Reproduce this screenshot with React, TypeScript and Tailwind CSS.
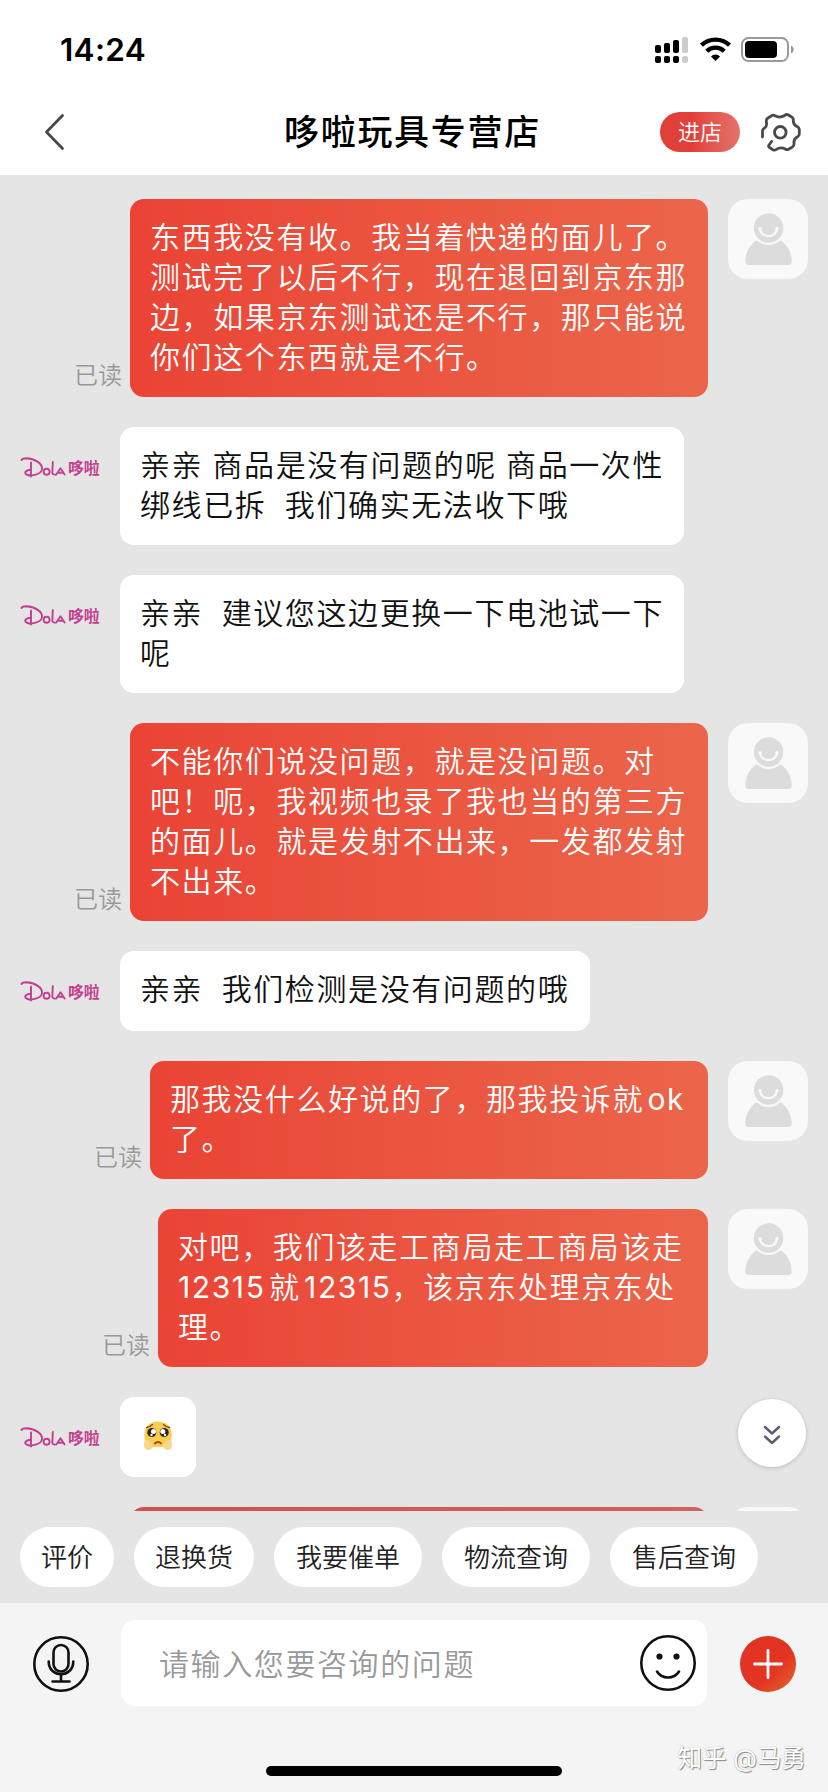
const FONT = "font-['Inter','Noto_Sans_CJK_SC',sans-serif]"

type Message = {
  from: 'me' | 'shop'
  lines: string[]
  width: string
}

const messages: Message[] = [
  {
    from: 'me',
    width: 'w-[578px]',
    lines: [
      '东西我没有收。我当着快递的面儿了。',
      '测试完了以后不行，现在退回到京东那',
      '边，如果京东测试还是不行，那只能说',
      '你们这个东西就是不行。',
    ],
  },
  {
    from: 'shop',
    width: 'w-[564px]',
    lines: ['亲亲 商品是没有问题的呢 商品一次性', '绑线已拆  我们确实无法收下哦'],
  },
  {
    from: 'shop',
    width: 'w-[564px]',
    lines: ['亲亲  建议您这边更换一下电池试一下', '呢'],
  },
  {
    from: 'me',
    width: 'w-[578px]',
    lines: [
      '不能你们说没问题，就是没问题。对',
      '吧！呃，我视频也录了我也当的第三方',
      '的面儿。就是发射不出来，一发都发射',
      '不出来。',
    ],
  },
  {
    from: 'shop',
    width: 'w-[470px]',
    lines: ['亲亲  我们检测是没有问题的哦'],
  },
  {
    from: 'me',
    width: 'w-[558px]',
    lines: ['那我没什么好说的了，那我投诉就ok', '了。'],
  },
  {
    from: 'me',
    width: 'w-[550px]',
    lines: ['对吧，我们该走工商局走工商局该走', '12315就12315，该京东处理京东处', '理。'],
  },
]

const quickActions = [
  { label: '评价', width: 'w-[94px]' },
  { label: '退换货', width: 'w-[120px]' },
  { label: '我要催单', width: 'w-[148px]' },
  { label: '物流查询', width: 'w-[148px]' },
  { label: '售后查询', width: 'w-[148px]' },
]

// runs of latin letters and digits, kept as their own parts
const LATIN_RUN = /(\w+)/

function StatusIcons() {
  return (
    <svg width="140" height="28" viewBox="0 0 140 28">
      {/* dual-SIM signal */}
      <g fill="#000">
        <rect x="0" y="9" width="6" height="8" rx="2" />
        <rect x="9" y="7" width="6" height="10" rx="2" />
        <rect x="18" y="4" width="6" height="13" rx="2" />
        <rect x="0" y="20" width="6" height="7" rx="2" />
        <rect x="9" y="20" width="6" height="7" rx="2" />
        <rect x="18" y="20" width="6" height="7" rx="2" />
      </g>
      <rect x="27" y="1" width="6" height="16" rx="2" fill="#ccc" />
      <rect x="27" y="20" width="6" height="7" rx="2" fill="#ccc" />
      {/* wifi */}
      <g fill="none" stroke="#000" strokeWidth="4.4">
        <path d="M46.5 9.2a20.5 20.5 0 0 1 28 0" />
        <path d="M51.8 15.2a12.4 12.4 0 0 1 17.4 0" />
      </g>
      <path d="M60.5 25l-4.6-4.6a6.8 6.8 0 0 1 9.2 0z" fill="#000" />
      {/* battery */}
      <rect x="87" y="2" width="46" height="23" rx="6.5" fill="none" stroke="#999" strokeWidth="2" />
      <rect x="90" y="5" width="32" height="17" rx="4" fill="#000" />
      <path d="M136 9.5c3.6 1.6 3.6 6.4 0 8z" fill="#999" />
    </svg>
  )
}

function GearIcon() {
  return (
    <svg width="42" height="42" viewBox="0 0 42 42" fill="none" stroke="#48494d" strokeWidth="2.8" strokeLinecap="round" strokeLinejoin="round">
      <circle cx="20.3" cy="21.3" r="5.8" />
      <path d="M2.500 26V20Q2.500 18 4.500 17Q7 15.500 6.500 12.500L6.300 9.500Q6.500 8 8 7L12 4.500Q13.500 3.800 15 4.800Q20 7.500 24.500 4.500Q26.500 3 28 3.800L32 6.200Q33.500 7 33.300 9Q33 13.500 37 15.500Q39.300 16.500 39.300 19V23Q39.300 25 37.500 25.800Q33.500 28 34 32Q34.300 35 32.500 36L28.500 38.300Q27 39.200 25.300 38Q20.500 35.500 16.500 38.300Q14.500 39.700 13 38.800L9.500 36.500Q8 35.500 9 34L11.500 30.500" />
    </svg>
  )
}

function ShopLogo() {
  return (
    <div className="mt-[29px] flex h-[26px] w-20 shrink-0 items-center text-[#c4408f]">
      <svg className="overflow-visible" width="80" height="26" viewBox="0 0 80 26">
        <g fill="none" stroke="currentColor" strokeWidth="1.9" strokeLinecap="round" strokeLinejoin="round">
          <path d="M1.500 4Q2.500 2.300 6.500 2.300C14.500 2.500 22.500 7.500 22 13C21.500 18 12.500 20.500 7.500 19C3 17.500 5.500 14 11 13.800" />
          <path d="M11 6.500V20.500" />
          <circle cx="26.600" cy="15.800" r="3" />
          <path d="M32.800 6L32.300 17Q32.800 19 36.300 18.500L40.500 12.300L44.600 18.500M38.300 16.700H42.800" />
        </g>
        <text x="48" y="18" fill="currentColor" fontSize="15.8" fontWeight="700" fontFamily="'Noto Sans CJK SC', sans-serif">
          哆啦
        </text>
      </svg>
    </div>
  )
}

function UserAvatar() {
  return (
    <div className="size-20 shrink-0 rounded-[20px] bg-[#f9f9f9]">
      <svg width="80" height="80" viewBox="0 0 80 80">
        <path d="M17.3 63C17.300 53 22 46 28 41.500H53C59 46 63.700 53 63.700 63Q63.500 66 60 66H21Q17.500 66 17.300 63Z" fill="#dcdcdc" />
        <circle cx="40.600" cy="29" r="17" fill="#f9f9f9" />
        <circle cx="40.600" cy="29" r="14.700" fill="#dcdcdc" />
        <path d="M32 30C33.500 39.500 47.500 39.500 49 30" fill="none" stroke="#f9f9f9" strokeWidth="2.400" strokeLinecap="round" />
        <circle cx="32" cy="29.600" r="1.700" fill="#f9f9f9" />
        <circle cx="49" cy="29.600" r="1.700" fill="#f9f9f9" />
      </svg>
    </div>
  )
}

function PleadingFace() {
  return (
    <svg width="30" height="30" viewBox="0 0 30 30">
      <path d="M1.500 17C0 7 6 .5 15 .5S30 7 28.500 17L27 26H3Z" fill="#f8ce4b" />
      <path d="M2 19C5 17.500 7 21 9 22C11 25 9 29 5.500 29C1 29 0 24 2 19ZM28 19C25 17.500 23 21 21 22C19 25 21 29 24.500 29C29 29 30 24 28 19Z" fill="#f6d78d" />
      <circle cx="8.800" cy="11.500" r="4.500" fill="#33211d" />
      <circle cx="21.200" cy="11.500" r="4.500" fill="#33211d" />
      <circle cx="10.500" cy="10.500" r="2.500" fill="#fff" />
      <circle cx="19.800" cy="10.500" r="2.500" fill="#fff" />
      <circle cx="8.500" cy="14" r="1.200" fill="#fff" />
      <circle cx="22" cy="14" r="1.200" fill="#fff" />
      <path d="M3.500 6.500Q7 6 9.500 3.500M26.500 6.500Q23 6 20.500 3.500" fill="none" stroke="#7a4a1c" strokeWidth="1.300" strokeLinecap="round" />
      <path d="M11.800 22.500Q15 19.500 18.200 22.500" fill="none" stroke="#a4471f" strokeWidth="1.800" strokeLinecap="round" />
    </svg>
  )
}

function MessageRow({ message }: { message: Message }) {
  const text = message.lines.map((line) => (
    <div key={line} className="h-10">
      {line.split(LATIN_RUN).map((part, i, parts) => {
        if (i % 2 === 0) return part
        // a little air beside a Han character, none at the line start or before a comma
        const before = parts[i - 1] ? 'ml-[3.5px]' : ''
        const after = /^[，。]|^$/.test(parts[i + 1]) ? '' : 'mr-[3.5px]'
        return (
          <span key={i} className={`font-normal ${before} ${after}`}>
            {part}
          </span>
        )
      })}
    </div>
  ))

  if (message.from === 'shop') {
    return (
      <div className="flex items-start gap-5 pl-5">
        <ShopLogo />
        <div
          className={`${message.width} min-h-20 rounded-[14px] bg-white px-5 pt-[18px] pb-5 text-[30px] leading-10 font-[350] tracking-[1.6px] whitespace-pre text-[#111] [word-spacing:-0.8px]`}
        >
          {text}
        </div>
      </div>
    )
  }

  return (
    <div className="flex items-start justify-end gap-5 pr-5">
      <div className="flex items-end gap-2">
        <span className="mb-[3px] text-[24px] leading-9 font-[350] text-[#999]">已读</span>
        <div
          className={`${message.width} rounded-[14px] bg-linear-to-r from-[#ea4335] to-[#eb654b] px-5 pt-[18px] pb-5 text-[30px] leading-10 font-[350] tracking-[1.6px] whitespace-pre text-white`}
        >
          {text}
        </div>
      </div>
      <UserAvatar />
    </div>
  )
}

export default function App() {
  return (
    <div className={`${FONT} relative flex h-[1792px] w-[828px] flex-col overflow-hidden bg-white`}>
      {/* Status bar */}
      <div className="flex h-[88px] shrink-0 items-start justify-between pt-[36px] pr-[33px] pl-[60px]">
        <span className="text-[31.5px] leading-7 font-semibold tracking-[0.3px] text-black">14:24</span>
        <StatusIcons />
      </div>

      {/* Title bar */}
      <header className="relative flex h-[87px] shrink-0 items-center justify-between pr-[26px] pl-[44px]">
        <svg width="22" height="38" viewBox="0 0 22 38" fill="none" stroke="#48494d" strokeWidth="2.8" strokeLinecap="round" strokeLinejoin="round">
          <path d="M18.500 2.500L2.500 19L18.500 35.500" />
        </svg>
        <h1 className="absolute top-[21px] left-[284px] text-[35px] leading-[46px] font-medium tracking-[1.7px] text-black">哆啦玩具专营店</h1>
        <div className="flex items-center gap-5">
          <button className="h-10 w-20 rounded-full bg-linear-to-r from-[#e1403a] from-40% to-[#e4716b] text-[22px] leading-10 font-[350] text-white">
            进店
          </button>
          <GearIcon />
        </div>
      </header>

      {/* Conversation */}
      <main className="h-[1336px] shrink-0 overflow-hidden bg-[#e5e5e5] pt-6">
        <div className="flex flex-col gap-[30px]">
          {messages.map((message) => (
            <MessageRow key={message.lines[0]} message={message} />
          ))}
          <div className="flex items-start gap-5 pl-5">
            <ShopLogo />
            <div className="flex h-20 w-[76px] justify-center rounded-[14px] bg-white pt-6">
              <PleadingFace />
            </div>
          </div>
          <div className="flex items-start justify-end gap-5 pr-5">
            <div className="h-20 w-[578px] rounded-[14px] bg-linear-to-r from-[#cd5249] to-[#d3625a]" />
            <UserAvatar />
          </div>
        </div>
      </main>

      {/* Quick actions */}
      <div className="flex h-[92px] shrink-0 items-center gap-5 bg-[#e5e5e5] pl-5">
        {quickActions.map((action) => (
          <button
            key={action.label}
            className={`${action.width} h-[60px] rounded-full bg-white text-[26px] leading-[62px] font-[350] text-[#222]`}
          >
            {action.label}
          </button>
        ))}
      </div>

      {/* Composer */}
      <footer className="relative flex flex-1 items-start bg-[#f4f4f4] pt-[17px] pl-[33px]">
        <svg className="mt-4" width="56" height="56" viewBox="0 0 56 56" fill="none" stroke="#111" strokeWidth="2.6" strokeLinecap="round">
          <circle cx="28" cy="28" r="26.700" />
          <rect x="20.500" y="9" width="15" height="26.500" rx="7.500" />
          <path d="M15.700 25.500C15.700 42.500 40.300 42.500 40.300 25.500M28 39V45.500M19.500 45.500H36.500" />
        </svg>
        <div className="ml-8 flex h-[86px] w-[586px] items-center justify-between rounded-[14px] bg-white pr-[11px] pl-[38px]">
          <span className="pt-0.5 text-[30px] leading-10 font-[350] tracking-[1.6px] text-[#999]">请输入您要咨询的问题</span>
          <svg width="56" height="56" viewBox="0 0 56 56" fill="none" stroke="#111" strokeWidth="2.6" strokeLinecap="round">
            <circle cx="28" cy="28" r="26.700" />
            <circle cx="19.500" cy="21.500" r="3.100" fill="#111" stroke="none" />
            <circle cx="36.500" cy="21.500" r="3.100" fill="#111" stroke="none" />
            <path d="M17 36.500C22 44.500 34 44.500 39 36.500" />
          </svg>
        </div>
        <svg className="mt-4 ml-[33px]" width="56" height="56" viewBox="0 0 56 56">
          <defs>
            <linearGradient id="add" x1="0" y1="0" x2="1" y2="1">
              <stop offset="0.6" stopColor="#e33423" />
              <stop offset="1" stopColor="#e06a2c" />
            </linearGradient>
          </defs>
          <circle cx="28" cy="28" r="28" fill="url(#add)" />
          <path d="M28 14.500V41.500M14.500 28H41.500" stroke="#fff" strokeWidth="2.8" strokeLinecap="round" />
        </svg>
        <div className="absolute bottom-4 left-[266px] h-[10px] w-[296px] rounded-full bg-black" />
        <span className="absolute right-[22px] bottom-4 text-[24.5px] leading-9 text-white [text-shadow:1px_1px_1px_#888,0_0_1px_#999]">
          知乎 @马勇
        </span>
      </footer>

      {/* Scroll to latest */}
      <button className="absolute top-[1399px] left-[738px] flex size-[68px] items-center justify-center rounded-full bg-white shadow-[0_1px_4px_rgba(0,0,0,0.18)]">
        <svg className="mt-1" width="18" height="20" viewBox="0 0 18 20" fill="none" stroke="#5e5d70" strokeWidth="2.4" strokeLinecap="round" strokeLinejoin="round">
          <path d="M2 2L9 8.500L16 2M2 11.500L9 18L16 11.500" />
        </svg>
      </button>
    </div>
  )
}
